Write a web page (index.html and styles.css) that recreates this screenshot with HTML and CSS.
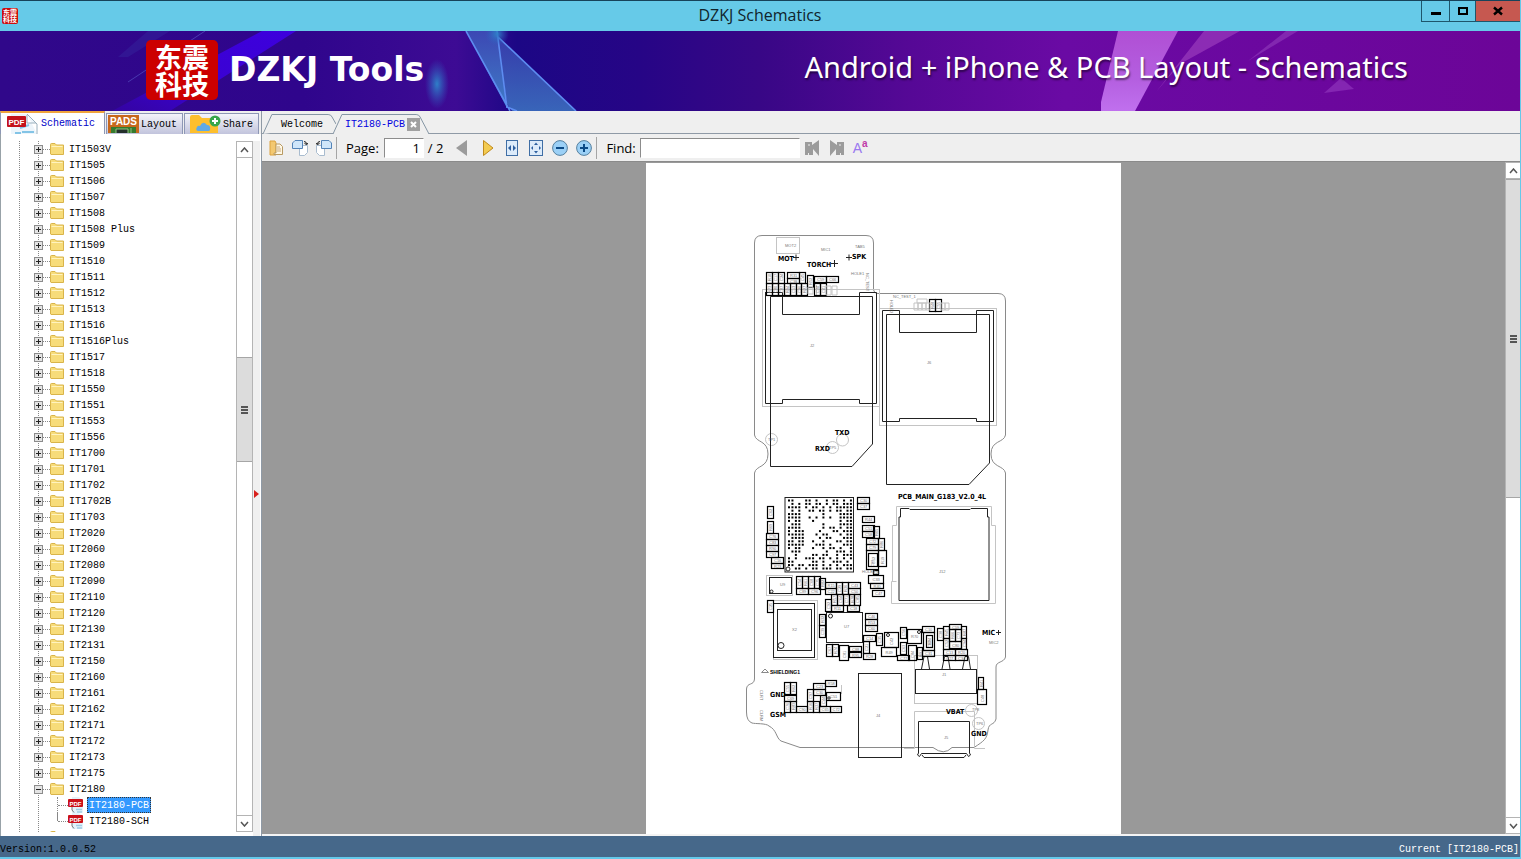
FILE: index.html
```html
<!DOCTYPE html>
<html lang="en">
<head>
    <meta charset="UTF-8">
    <meta name="viewport" content="width=device-width, initial-scale=1.0">
    <title>DZKJ Schematics</title>
    <link rel="stylesheet" href="styles.css">
</head>
<body>
    <header class="titlebar">
        <span class="app-icon"><span>东震</span><span>科技</span></span>
        <h1>DZKJ Schematics</h1>
        <div class="window-buttons">
            <button class="win-btn" aria-label="Minimize"><svg width="10" height="10"><rect y="6" width="10" height="3"/></svg></button>
            <button class="win-btn max" aria-label="Maximize"><svg width="10" height="10"><rect x="1" y="2" width="8" height="6" fill="none" stroke="#000" stroke-width="2"/></svg></button>
            <button class="win-btn close" aria-label="Close"><svg width="10" height="10"><path d="M1 1.500L9 8.500M9 1.500L1 8.500" stroke="#000" stroke-width="2.4"/></svg></button>
        </div>
    </header>

    <div class="banner">
        <svg class="banner-art" viewBox="0 31 1520 80" preserveAspectRatio="none" aria-hidden="true">
            <defs>
                <linearGradient id="bg">
                    <stop offset="0" stop-color="#30088a"/>
                    <stop offset=".2" stop-color="#2f058c"/>
                    <stop offset=".3" stop-color="#3d0b94"/>
                    <stop offset=".34" stop-color="#1c0785"/>
                    <stop offset=".42" stop-color="#260586"/>
                    <stop offset=".5" stop-color="#380786"/>
                    <stop offset=".6" stop-color="#560896"/>
                    <stop offset=".7" stop-color="#6a0aa4"/>
                    <stop offset="1" stop-color="#6c0598"/>
                </linearGradient>
                <linearGradient id="beam" x1="1" y1="0" x2="0" y2="1">
                    <stop offset="0" stop-color="#3d00dd"/>
                    <stop offset=".6" stop-color="#3a02d2"/>
                    <stop offset="1" stop-color="#3404a0"/>
                </linearGradient>
                <linearGradient id="blue" x1="0" y1="0" x2="0" y2="1">
                    <stop offset="0" stop-color="#3c48b4"/>
                    <stop offset="1" stop-color="#3f7cc6"/>
                </linearGradient>
                <linearGradient id="pink" x1="0" y1="0" x2="0" y2="1">
                    <stop offset="0" stop-color="#b04fd4"/>
                    <stop offset=".6" stop-color="#b45fe0"/>
                    <stop offset="1" stop-color="#c070ee"/>
                </linearGradient>
                <radialGradient id="spot">
                    <stop offset="0" stop-color="#2f7fc8"/>
                    <stop offset="1" stop-color="#2f5fc0" stop-opacity="0"/>
                </radialGradient>
            </defs>
            <rect y="31" width="1520" height="80" fill="url(#bg)"/>
            <path d="M262 31H296L170 111H112Z" fill="url(#beam)"/>
            <path d="M148 31H170L128 57H118Z" fill="#34209a" opacity=".6"/>
            <path d="M205 31L128 82" stroke="#4a3ab0" stroke-width="1"/>
            <ellipse cx="437" cy="84" rx="12" ry="25" fill="url(#spot)"/>
            <path d="M466 31H497L507 108Z" fill="url(#blue)"/>
            <path d="M497 36L576 111H512L507 104Z" fill="url(#blue)" opacity=".8"/>
            <path d="M466 31L510 111M497 31L507 108M497 36L576 111M507 107L517 111" stroke="#5d8cf0" stroke-width="1.6" fill="none"/>
            <circle cx="497" cy="34" r="12" fill="url(#spot)"/>
            <path d="M1204 31H1240L1180 64L1156 92Z" fill="#9a3cbc" opacity=".7"/>
            <path d="M1286 31H1298L1248 61Z" fill="#8c35b8" opacity=".7"/>
            <path d="M1118 31H1178L1135 111H1101V102Z" fill="url(#pink)"/>
            <path d="M1341 78L1354 89L1324 93Z" fill="#8426b2"/>
        </svg>
        <div class="logo"><span>东震</span><span>科技</span></div>
        <strong class="brand">DZKJ Tools</strong>
        <p class="slogan">Android + iPhone &amp; PCB Layout - Schematics</p>
    </div>

    <!-- icons shared by the tabs and the tree -->
    <svg class="sprite" aria-hidden="true">
        <symbol id="folder" viewBox="0 0 14 12">
            <path d="M.5 11V1.5Q.5.5 1.500.5H5L6.500 2H13.500V11.500H1Z" fill="#f7dc7a" stroke="#d9b44a"/>
            <path d="M1.500 3.500H12.500" stroke="#fff3c0"/>
        </symbol>
        <symbol id="pdf" viewBox="0 0 16 16">
            <path d="M4 0H11L15 4V16H4Z" fill="#e4f2fa"/>
            <path d="M4 10V13L6 15.500" stroke="#777" fill="none"/>
            <path d="M8 12.500H14M9 15H14" stroke="#9fcde4" stroke-width="1.500"/>
            <rect y="2" width="15" height="8" rx="1" fill="#cb1018"/>
            <text x="7.500" y="8.500" class="pdf-text" font-size="6">PDF</text>
        </symbol>
    </svg>

    <main class="workspace">
        <aside class="sidebar">
            <nav class="side-tabs">
                <button class="side-tab active">
                    <svg width="32" height="20" viewBox="0 0 32 20">
                        <path d="M4 0H20L30 10V20H4Z" fill="#edf5fb"/>
                        <path d="M20 0L30 10V20M20 1V9H29" fill="#fff" stroke="#9ab0bd"/>
                        <path d="M13 14L22 11M15 18H27M8 19H14" stroke="#83c4e6" stroke-width="2"/>
                        <rect y="2" width="19" height="11" rx="1" fill="#c4121b"/>
                        <text x="9.500" y="10.500" class="pdf-text" font-size="8">PDF</text>
                    </svg>
                    Schematic
                </button>
                <button class="side-tab">
                    <svg width="31" height="18" viewBox="0 0 31 18">
                        <rect width="31" height="18" fill="#c7681c"/>
                        <path d="M3 18V12H28V18Z" fill="#357a2e"/>
                        <path d="M8 18V14H20V18M23 13V18" fill="#23302b" stroke="#8fc27f"/>
                        <text x="15.500" y="10" class="pads-text">PADS</text>
                    </svg>
                    Layout
                </button>
                <button class="side-tab">
                    <svg width="32" height="18" viewBox="0 0 32 18">
                        <path d="M1 18V2Q1 0 3 0H10L13 3H27Q29 3 29 5V18Z" fill="#fdbf2d"/>
                        <path d="M9 16Q6 15 8 12Q9 10 11 11Q14 5 18 10Q22 10 21 15L20 16Z" fill="#5fa9e6"/>
                        <circle cx="26" cy="6" r="5.500" fill="#36a64a"/>
                        <path d="M23 6H29M26 3V9" stroke="#fff" stroke-width="2"/>
                    </svg>
                    Share
                </button>
            </nav>
            <div class="side-body">
                <ul class="tree" id="tree"></ul>
                <div class="scrollbar">
                    <button class="scroll-btn" aria-label="Up"><svg width="9" height="6"><path d="M1 5L4.500 1L8 5" class="chev"/></svg></button>
                    <div class="track side-track"><div class="thumb"><i></i><i></i><i></i></div></div>
                    <button class="scroll-btn" aria-label="Down"><svg width="9" height="6"><path d="M1 1L4.500 5L8 1" class="chev"/></svg></button>
                </div>
                <div class="splitter"><svg width="5" height="8"><path d="M0 0L5 4L0 8Z" fill="#d8201c"/></svg></div>
            </div>
        </aside>

        <section class="viewer">
            <nav class="doc-tabs">
                <button class="doc-tab welcome">
                    <svg class="tab-shape" viewBox="0 0 74 20" preserveAspectRatio="none"><path d="M0 20L9 .5H66Q69 .5 70 3L74 10"/></svg>
                    <span>Welcome</span>
                </button>
                <button class="doc-tab current">
                    <svg class="tab-shape" viewBox="0 0 97 20" preserveAspectRatio="none"><path d="M0 20L9 .5H84Q87 .5 88 3L97 20"/></svg>
                    <span>IT2180-PCB</span>
                    <svg class="tab-close" width="13" height="13"><rect width="13" height="13" fill="#a0a0a0"/><path d="M4 4L9 9M9 4L4 9" stroke="#fff" stroke-width="2"/></svg>
                </button>
            </nav>

            <div class="toolbar">
                <button aria-label="Open"><svg width="16" height="16"><path d="M2 1H7L8 3V15H2Z" fill="#f3c870" stroke="#dca23f"/><path d="M8 4H12L14.500 6.500V14.500H6V13H8Z" fill="#fff8e6" stroke="#b89a62"/><path d="M9 7H12M9 9H13M9 11H13" stroke="#c9a97a"/></svg></button>
                <button aria-label="Rotate right"><svg width="16" height="16"><path d="M7.500 5.500H15.500V12.500L12.500 15.500H7.500Z" fill="#fff" stroke="#a9bccf"/><path d="M3 .5H10.500V8.500H.5V3Z" fill="#cfe6fa" stroke="#5484b8"/><path d="M12 1.500Q14.500 1.500 14.500 4M12.500 3L14.500 5L16 3" fill="none" stroke="#222"/></svg></button>
                <button aria-label="Rotate left"><svg width="16" height="16"><path d="M.5 5.500H8.500V15.500H3.500L.5 12.500Z" fill="#fff" stroke="#a9bccf"/><path d="M5.500 .5H13L15.500 3V8.500H5.500Z" fill="#cfe6fa" stroke="#5484b8"/><path d="M4 1.500Q1.500 1.500 1.500 4M0 3L1.500 5L3.500 3" fill="none" stroke="#222"/></svg></button>
                <span class="sep"></span>
                <label for="page">Page:</label>
                <input class="page-input" id="page" type="text" value="1">
                <span class="pages">/ 2</span>
                <button aria-label="Previous page"><svg width="16" height="16"><path d="M13 0V16L2 8Z" fill="#9b9b9b"/></svg></button>
                <button class="next" aria-label="Next page"><svg width="16" height="16"><path d="M3.500 .5V15.500L13 8Z" fill="#f3cb50" stroke="#c08a1c"/></svg></button>
                <button aria-label="Fit width"><svg width="16" height="16"><rect x="2.500" y=".5" width="11" height="15" fill="#dcebfa" stroke="#3f6ea5"/><path d="M7 5V11L4 8ZM9 5V11L12 8Z" fill="#2d5f9f"/></svg></button>
                <button aria-label="Fit page"><svg width="16" height="16"><rect x="1.500" y=".5" width="13" height="15" fill="#dcebfa" stroke="#3f6ea5"/><path d="M8 2.500L10 5H6ZM8 13.500L6 11H10ZM3 8L5 6V10ZM13 8L11 6V10Z" fill="#2d5f9f"/></svg></button>
                <button aria-label="Zoom out"><svg width="16" height="16"><circle cx="8" cy="8" r="7.400" fill="#9bd0f6" stroke="#56809f"/><path d="M4 8H12" stroke="#0b4a86" stroke-width="2"/></svg></button>
                <button aria-label="Zoom in"><svg width="16" height="16"><circle cx="8" cy="8" r="7.400" fill="#9bd0f6" stroke="#56809f"/><path d="M4 8H12M8 4V12" stroke="#0b4a86" stroke-width="2"/></svg></button>
                <span class="sep"></span>
                <label for="find">Find:</label>
                <input class="find-input" id="find" type="text">
                <button aria-label="Find previous"><svg width="16" height="16"><path d="M0 2H7V5L14 0V16L8 9V15H0Z" fill="#9b9b9b"/><path d="M3 5H5M3.500 13V15" stroke="#eee"/></svg></button>
                <button aria-label="Find next"><svg width="16" height="16"><path d="M15 2H8V5L1 0V16L7 9V15H15Z" fill="#9b9b9b"/><path d="M10 5H12M11.500 13V15" stroke="#eee"/></svg></button>
                <button class="match-case" aria-label="Match case">A<sup>a</sup></button>
            </div>

            <div class="canvas">
                <div class="page-area">
                    <svg class="page" id="pcb" viewBox="646 163 475 671">
                        <g class="thin">
                            <path d="M762 235.500H866Q873.500 235.500 873.500 243V289Q874 293.500 878 293.500H998Q1005.500 293.500 1005.500 301V435C1004 443 991 440 991 454C991 468 1004 465 1005.500 473V657C1004 663 996 661 996 667V719C994 726 989 722 988 730C987 739 984 741 974 747.500H952Q944 756 933 747.500H800L781 741C776 738 777 730 769 726C766 723 755 724 752 723Q746.500 721 746.500 712V689C747 682 754 686 754.500 679V473C756 465 768 468 768 454C768 440 756 443 754.500 435V243Q754.500 235.500 762 235.500Z"/>
                        </g>
                        <g class="light">
                            <rect x="776.500" y="237.500" width="23" height="16"/>
                            <rect x="762.500" y="289.500" width="117" height="117"/>
                            <rect x="879.500" y="308.500" width="117" height="117"/>
                            <circle cx="771.500" cy="439.500" r="6"/>
                            <circle cx="842.500" cy="440" r="6"/>
                            <circle cx="832.500" cy="447.500" r="6"/>
                            <circle cx="971.500" cy="710.500" r="6"/>
                            <circle cx="978.500" cy="723.500" r="6"/>
                            <path d="M896.500 506.500H991.500V525.500H995.500V603.500H891.500V581.500H896.500M896.500 506.500V525.500H892.500V581"/>
                            <rect x="766.500" y="575.500" width="26" height="20"/>
                            <rect x="773.500" y="600.500" width="44" height="59"/>
                            <rect x="914.500" y="655.500" width="63" height="48"/>
                            <path d="M904 748.500H914.500V711.500H974.500V748.500H985"/>
                            <path d="M841.500 685V694M816.500 285V295"/>
                        </g>
                        <g class="thin">
                            <path d="M761.500 672.500H768.500L765 669Z"/>
                        </g>
                        <g class="line">
                            <path d="M765.500 292V403.500H782.500V399.500H859.500V403.500H876.500V292.500H859.500V314.500H782.500V292.500H765.500"/>
                            <path d="M770.500 296.500H872.500V444L852 466.500H770.500Z"/>
                            <path d="M882.500 310.500H899.500V332.500H976.500V310.500H993.500V421.500H976.500V418.500H899.500V421.500H882.500Z"/>
                            <path d="M886.500 314.500H989.500V463L969 484.500H886.500Z"/>
                            <path d="M899 600.500V517H900.500V508.500H909L910 509.500H970L971 508.500H987.500V517H989V600.500Z"/>
                            <rect x="785" y="497.500" width="68.500" height="74.500"/>
                            <rect x="769.500" y="577.500" width="22" height="16"/>
                            <circle cx="788" cy="569" r="2"/><circle cx="771.500" cy="591.500" r="1.500"/>
                            <rect x="773.500" y="603.500" width="41" height="54"/>
                            <rect x="777.500" y="609.500" width="34" height="41"/>
                            <circle cx="781" cy="645.500" r="3"/>
                            <rect x="826.500" y="612.500" width="36" height="30"/>
                            <circle cx="830.500" cy="616" r="2"/>
                            <circle cx="888" cy="635" r="1.500"/><circle cx="919" cy="632" r="1.500"/>
                            <rect x="858.500" y="673.500" width="43" height="84"/>
                            <rect x="915.500" y="669.500" width="61" height="24"/>
                            <path d="M921.500 669L924 656.500H927.500L929.500 669M942 669L944.500 656.500H948L950 669M962.500 669L965 656.500H968.500L970.500 669"/>
                            <path d="M918.500 753V721.500H969.500V753M918.500 753L917.500 755L919.500 756.500L921.500 753.500H966.500L968.500 756.500L970.500 755L969.500 753M922 755L924 757.500H964L966 755"/>
                            <circle cx="829" cy="698" r="1.200"/>
                        </g>
                        <g id="dots"></g>
                        <g class="parts" id="parts"></g>
                        <g class="mark">
                            <text x="778" y="261">MOT</text><text x="807" y="267">TORCH</text><text x="852" y="259">SPK</text>
                            <text x="835" y="435">TXD</text>
                            <text x="815" y="451">RXD</text>
                            <text x="898" y="499">PCB_MAIN_G183_V2.0_4L</text>
                            <text x="770" y="674" class="small">SHIELDING1</text>
                            <text x="770" y="697">GND</text>
                            <text x="770" y="717">GSM</text>
                            <text x="982" y="635">MIC</text>
                            <text x="946" y="714">VBAT</text>
                            <text x="971" y="736">GND</text>
                        </g>
                        <g class="plus">
                            <path d="M793 257.500H799M796 254.500V260.500M831 263.500H838M834.500 260V267M846 257.500H852M849 254.500V260.500M996 632.500H1001M998.500 630V635"/>
                        </g>
                        <g class="ref">
                            <text x="785" y="247">MOT2</text><text x="821" y="251">MIC1</text><text x="855" y="248">TAB5</text>
                            <text x="851" y="275">HOLE1</text><text x="893" y="298">NC_TEST_1</text>
                            <text x="810" y="347">J2</text><text x="927" y="364">J6</text>
                            <text x="768" y="441">TP1</text><text x="829" y="449">TP5</text>
                            <text x="939" y="573">J12</text><text x="780" y="586">U9</text><text x="792" y="631">X2</text>
                            <text x="844" y="628">U7</text><text x="862" y="573">HOLE3</text>
                            <text x="989" y="644">MIC2</text><text x="942" y="676">J1</text>
                            <text x="876" y="717">J4</text><text x="944" y="739">J5</text>
                            <text x="976" y="725">TP6</text><text x="972" y="711">TP8</text>
                            <text class="turn" x="867" y="273">NC_TEST</text><text class="turn" x="891" y="300">HOLE2</text>
                            <text class="turn" x="761" y="690">CLRT</text><text class="turn" x="761" y="710">CLRM</text>
                        </g>
                    </svg>
                </div>
                <div class="scrollbar">
                    <button class="scroll-btn" aria-label="Up"><svg width="9" height="6"><path d="M1 5L4.500 1L8 5" class="chev"/></svg></button>
                    <div class="track page-track"><div class="thumb"><i></i><i></i><i></i></div></div>
                    <button class="scroll-btn" aria-label="Down"><svg width="9" height="6"><path d="M1 1L4.500 5L8 1" class="chev"/></svg></button>
                </div>
            </div>
        </section>
    </main>

    <footer class="statusbar">
        <span>Version:1.0.0.52</span>
        <span class="current-doc">Current [IT2180-PCB]</span>
    </footer>

    <script src="app.js"></script>
</body>
</html>
```

FILE: styles.css
```css
* {
    box-sizing: border-box;
}
body {
    margin: 0;
    height: 100vh;
    display: flex;
    flex-direction: column;
    overflow: hidden;
    background-color: #efefef;
    font-family: "Liberation Mono", "Noto Sans CJK SC", monospace;
    font-size: 10px;
    color: #000;
    border-right: 1px solid #64c9ea;
}
button {
    font: inherit;
    color: inherit;
    border: none;
    background: none;
    padding: 0;
    margin: 0;
}
svg {
    display: block;
    flex: none;
}
.sprite {
    display: none;
}

/* title bar */
.titlebar {
    flex: none;
    height: 31px;
    display: grid;
    grid-template-columns: 1fr auto 1fr;
    align-items: center;
    background-color: #66cae8;
    border-top: 1px solid #17435a;
}
.titlebar h1 {
    margin: 0;
    padding-bottom: 2px;
    font: 16px/24px "Open Sans", sans-serif;
    color: #10242c;
}
.app-icon {
    display: flex;
    flex-direction: column;
    width: 16px;
    height: 16px;
    margin-left: 2px;
    padding: 1px;
    border-radius: 2px;
    background-color: #cc0d0d;
    color: #fff;
    font: bold 7px/7px "Noto Sans CJK SC", sans-serif;
}
.window-buttons {
    display: flex;
    align-self: start;
    justify-self: end;
}
.win-btn {
    width: 28px;
    height: 21px;
    display: flex;
    align-items: center;
    justify-content: center;
    border: 1px solid #1e566c;
    border-width: 0 0 1px 1px;
}
.win-btn.max {
    width: 26px;
}
.win-btn.close {
    width: 45px;
    background-color: #c65850;
}

/* banner */
.banner {
    flex: none;
    height: 80px;
    display: flex;
    align-items: center;
    position: relative;
    padding: 0 112px 2px 146px;
    color: #fff;
}
.banner-art {
    position: absolute;
    inset: 0;
    width: 100%;
    height: 100%;
}
.logo, .brand, .slogan {
    position: relative;
}
.logo {
    display: flex;
    flex-direction: column;
    align-items: center;
    justify-content: center;
    width: 72px;
    height: 60px;
    border-radius: 5px;
    background-color: #cc0000;
    font: bold 27px/27px "Noto Sans CJK SC", sans-serif;
}
.brand {
    margin-left: 11px;
    font: bold 33px/40px "DejaVu Sans", sans-serif;
}
.slogan {
    margin: 0 0 6px auto;
    font: 29px/32px "Noto Sans", sans-serif;
    text-shadow: 1px 2px 2px rgba(0,0,0,0.5);
}

/* left panel */
.workspace {
    flex: 1;
    min-height: 0;
    display: flex;
}
.sidebar {
    width: 261px;
    flex: none;
    display: flex;
    flex-direction: column;
}
.side-tabs {
    flex: none;
    display: flex;
    align-items: flex-end;
    gap: 1px;
    height: 23px;
}
.side-tab {
    display: flex;
    align-items: center;
    gap: 2px;
    height: 21px;
    padding: 0 5px 0 1px;
    border: 1px solid #8d97b5;
    border-bottom: none;
    background: linear-gradient(#f4f4fa, #c2c4dc);
    overflow: hidden;
}
.side-tab:last-child {
    padding-left: 4px;
}
.side-tab.active {
    height: 23px;
    padding: 0 9px 0 6px;
    border-top: 2px solid #f0a43c;
    background: #fff;
    color: #0000c8;
}
.pdf-text, .pads-text {
    font-family: "Liberation Sans", sans-serif;
    font-weight: bold;
    fill: #fff;
    text-anchor: middle;
}
.pads-text {
    font-size: 10px;
}
.side-body {
    flex: 1;
    min-height: 0;
    display: flex;
    padding: 7px 0 0 1px;
    border-left: 1px solid #98a2a8;
    background-color: #fff;
}
.tree {
    flex: 1;
    margin: 0 0 4px;
    padding: 0;
    overflow: hidden;
    list-style: none;
    background:
        repeating-linear-gradient(#888 0 1px, transparent 1px 2px) 17px 0 / 1px 100% no-repeat,
        repeating-linear-gradient(#888 0 1px, transparent 1px 2px) 36px 0 / 1px 100% no-repeat;
}
.tree ul {
    margin: 0 0 0 55px;
    padding: 0;
    list-style: none;
}
.row {
    display: flex;
    align-items: center;
    height: 16px;
}
.tree > li > .row {
    padding-left: 32px;
}
.expander {
    width: 9px;
    height: 9px;
    border: 1px solid #8c8c8c;
    background:
        linear-gradient(#222, #222) 1px 3px / 5px 1px no-repeat,
        linear-gradient(#222, #222) 3px 1px / 1px 5px no-repeat,
        #e4e4e4;
}
.expander.open {
    background:
        linear-gradient(#222, #222) 1px 3px / 5px 1px no-repeat,
        #e4e4e4;
}
.dots {
    width: 7px;
    border-top: 1px dotted #888;
}
.tree ul .dots {
    width: 10px;
}
.tree ul li {
    border-left: 1px dotted #888;
}
.tree ul li:last-child {
    border-image: linear-gradient(#888 50%, transparent 50%) 1;
}
.name {
    margin-left: 4px;
    padding: 2px 1px 0;
    line-height: 14px;
    white-space: nowrap;
}
.tree ul .name {
    margin-left: 3px;
    padding: 2px 2px 0;
}
.name.selected {
    background-color: #3399ff;
    color: #fff;
    outline: 1px dotted #333;
    outline-offset: -1px;
}
.splitter {
    width: 8px;
    display: flex;
    align-items: center;
    padding: 11px 0 0 1px;
    background-color: #f0f0f0;
    border-right: 1px solid #fff;
}

/* scroll bars */
.scrollbar {
    width: 17px;
    flex: none;
    display: flex;
    flex-direction: column;
    margin-bottom: 4px;
    border: 1px solid #b4b4b4;
    background-color: #fff;
}
.scroll-btn {
    flex: none;
    height: 16px;
    display: flex;
    align-items: center;
    justify-content: center;
    background-color: #fff;
    border-bottom: 1px solid #b4b4b4;
}
.scroll-btn:last-child {
    border-top: 1px solid #b4b4b4;
    border-bottom: none;
}
.chev {
    fill: none;
    stroke: #555;
    stroke-width: 1.500;
}
.track {
    flex: 1;
    display: grid;
}
.side-track {
    grid-template-rows: 200fr 105fr 354fr;
}
.page-track {
    grid-template-rows: 0 321fr 320fr;
}
.thumb {
    grid-row: 2;
    display: flex;
    flex-direction: column;
    align-items: center;
    justify-content: center;
    gap: 1px;
    background-color: #dcdcdc;
    border: 1px solid #a6a6a6;
    border-width: 1px 0;
}
.thumb i {
    width: 7px;
    height: 2px;
    background-color: #555;
}

/* document tabs */
.viewer {
    flex: 1;
    min-width: 0;
    display: flex;
    flex-direction: column;
    border-left: 1px solid #8f9aa6;
}
.doc-tabs {
    flex: none;
    display: flex;
    align-items: flex-end;
    height: 23px;
    padding-left: 1px;
    border-bottom: 1px solid #8f9aa6;
}
.doc-tab {
    position: relative;
    display: flex;
    align-items: center;
    height: 20px;
    margin-bottom: -1px;
}
.doc-tab span {
    position: relative;
}
.doc-tab.welcome {
    margin-right: -3px;
    padding: 0 13px 0 18px;
}
.doc-tab.current {
    padding: 0 9px 0 12px;
    gap: 2px;
    color: #0000e0;
}
.tab-shape {
    position: absolute;
    inset: 0;
    width: 100%;
    height: 100%;
    fill: #efefef;
    stroke: #8495a3;
}
.tab-close {
    position: relative;
}

/* toolbar */
.toolbar {
    flex: none;
    display: flex;
    align-items: center;
    gap: 8px;
    height: 28px;
    padding-left: 6px;
    border-bottom: 1px solid #8a8a8a;
    font: 13px "Open Sans", sans-serif;
}
.sep {
    width: 1px;
    height: 22px;
    margin: 0 1px 0 -4px;
    background-color: #a5a5a5;
}
.toolbar input {
    height: 20px;
    border: 1px solid #8c8c8c;
    border-color: #8c8c8c #fff #fff #8c8c8c;
    background-color: #fff;
    font: inherit;
    padding: 0 3px;
}
.page-input {
    width: 40px;
    margin-left: -3px;
    text-align: right;
}
.find-input {
    width: 160px;
    margin: 0 -3px 0 -4px;
}
.pages {
    margin-left: -4px;
    margin-right: 3px;
}
.next {
    margin-left: 2px;
}
.match-case {
    font: 14px "Liberation Sans", sans-serif;
    color: #9a78f0;
}
.match-case sup {
    font-size: 10px;
    font-weight: bold;
    line-height: 0;
    color: #c03ca8;
}

/* page view */
.canvas {
    flex: 1;
    min-height: 0;
    display: flex;
    background-color: #999;
    border-bottom: 2px solid #f4f4f4;
}
.page-area {
    flex: 1;
    display: flex;
    justify-content: center;
    padding-top: 1px;
}
.page {
    height: 100%;
    aspect-ratio: 475 / 671;
    background-color: #fff;
}
.canvas .scrollbar {
    width: 15px;
    margin-bottom: 0;
    border-right: none;
}
.page path, .page rect, .page circle {
    fill: none;
}
.thin {
    stroke: #8a8a8a;
}
.light {
    stroke: #c4c4c4;
}
.line, .plus {
    stroke: #222;
}
.parts rect {
    stroke: #000;
    stroke-width: 1.200;
}
.parts text, .ref text {
    font: 4px "Liberation Sans", sans-serif;
    fill: #777;
}
.ref .turn {
    writing-mode: vertical-rl;
}
.page .dot {
    fill: #000;
}
.mark text {
    font: bold 7px "DejaVu Sans Condensed", "Liberation Sans", sans-serif;
}
.mark .small {
    font: bold 5px "Liberation Sans", sans-serif;
}

/* status bar */
.statusbar {
    flex: none;
    height: 23px;
    display: flex;
    justify-content: space-between;
    align-items: center;
    padding: 5px 1px 0 0;
    background-color: #46688a;
    border-bottom: 2px solid #64c9ea;
}
.current-doc {
    color: #fff;
}
```

FILE: app.js
```js
const folders = [
    'IT1503V', 'IT1505', 'IT1506', 'IT1507', 'IT1508', 'IT1508 Plus', 'IT1509', 'IT1510',
    'IT1511', 'IT1512', 'IT1513', 'IT1516', 'IT1516Plus', 'IT1517', 'IT1518', 'IT1550',
    'IT1551', 'IT1553', 'IT1556', 'IT1700', 'IT1701', 'IT1702', 'IT1702B', 'IT1703',
    'IT2020', 'IT2060', 'IT2080', 'IT2090', 'IT2110', 'IT2120', 'IT2130', 'IT2131',
    'IT2150', 'IT2160', 'IT2161', 'IT2162', 'IT2171', 'IT2172', 'IT2173', 'IT2175', 'IT2180'
];
const files = ['IT2180-PCB', 'IT2180-SCH'];

function fileRow(name) {
    const cls = name === 'IT2180-PCB' ? 'name selected' : 'name';
    return `<li><div class="row"><span class="dots"></span><svg width="16" height="16"><use href="#pdf"/></svg><button class="${cls}">${name}</button></div></li>`;
}

function folderRow(name) {
    const open = name === 'IT2180';
    return `<li><div class="row"><button class="expander${open ? ' open' : ''}" aria-label="${open ? 'Collapse' : 'Expand'} ${name}"></button>` +
        `<span class="dots"></span><svg width="14" height="12"><use href="#folder"/></svg><span class="name">${name}</span></div>` +
        (open ? `<ul>${files.map(fileRow).join('')}</ul>` : '') + '</li>';
}

document.getElementById('tree').innerHTML = folders.map(folderRow).join('') +
    '<li><div class="row"><span class="expander"></span><span class="dots"></span><svg width="14" height="12"><use href="#folder"/></svg></div></li>';

// small components: x, y, width, height
const parts = [
    [766,272,6,11],[772,272,6,11],[778,272,6,11],[787,272,12,6],[787,278,12,5],[799,272,6,11],[807,275,6,12],
    [814,276,12,6],[826,276,12,6],[766,283,6,12],[772,283,6,12],[778,283,6,12],[784,283,6,12],[790,283,6,12],
    [796,283,5,12],[801,283,6,12],[814,283,6,12],[820,283,6,12],[929,299,6,12],[935,299,6,12],
    [767,506,6,12],[767,521,6,12],[766,533,12,6],[766,539,12,6],[766,545,12,6],[766,551,12,6],[771,557,12,6],[771,563,12,5],
    [857,497,12,6],[857,503,12,6],[862,516,12,6],[862,525,12,6],[862,531,12,6],[873,526,6,12],
    [866,538,12,6],[866,544,12,6],[878,538,6,12],[866,550,12,19],[868,553,9,13],[878,550,8,16],[873,570,5,4],
    [868,575,15,8],[870,583,13,5],[872,590,12,6],
    [796,576,6,12],[802,576,6,12],[808,576,6,12],[814,576,6,12],[819,578,6,11],[796,588,12,6],[808,588,12,6],
    [825,582,11,6],[825,588,11,6],[836,582,6,12],[842,582,6,12],[848,582,12,6],[848,588,12,6],
    [831,594,6,11],[837,594,6,11],[843,594,6,11],[849,594,5,11],[854,594,6,11],[825,599,6,12],[831,605,12,6],[847,605,12,6],
    [767,600,6,12],[819,614,6,11],[819,625,6,12],[865,613,12,6],[865,619,12,6],[865,625,12,6],
    [826,644,6,12],[832,644,6,12],[839,645,9,15],[849,646,12,5],[849,652,12,5],[863,635,12,6],[863,641,6,12],[863,653,12,6],[876,633,6,12],
    [884,632,14,15],[881,647,15,9],[900,627,6,11],[900,642,6,12],[907,629,14,14],[897,655,12,5],[908,645,8,15],
    [917,647,5,12],[922,626,12,6],[923,632,11,18],[926,635,6,12],[922,650,12,6],[937,628,6,12],
    [943,626,6,12],[943,638,6,11],[949,624,12,5],[949,629,6,12],[955,629,6,12],[949,641,12,7],[961,626,5,12],[961,638,5,11],
    [943,649,12,6],[955,649,12,6],[943,655,12,5],[955,655,12,5],[978,677,5,12],[977,689,9,15],
    [784,682,6,12],[790,682,6,12],[784,695,12,6],[784,701,6,11],[790,701,6,11],[796,706,11,6],[807,689,6,12],[807,701,6,11],
    [813,683,12,6],[813,689,12,6],[813,701,6,11],[820,695,6,11],[826,692,14,8],[825,680,11,6],[819,706,11,6],[830,706,11,6]
];
const faint = [[914,303,4,7],[918,303,4,7],[922,303,4,7],[926,303,4,7],[917,299,10,4],[941,303,4,7],[945,303,4,7],[826,286,5,9],[832,286,5,9],[808,287,5,7]];

document.getElementById('parts').innerHTML = parts.map(([x, y, w, h], i) => {
    const ref = (i % 3 ? 'C' : 'R') + (10 + i * 7 % 88);
    const text = w < h
        ? `<text transform="translate(${x + w / 2 + 2} ${y + h - 2}) rotate(-90)">${ref}</text>`
        : `<text x="${x + w / 2 - 3}" y="${y + h / 2 + 2}">${ref}</text>`;
    return `<rect x="${x + 0.5}" y="${y + 0.5}" width="${w}" height="${h}"/>${text}`;
}).join('') + '<g class="light">' + faint.map(([x, y, w, h]) => `<path d="M${x} ${y}h${w}v${h}h${-w}z"/>`).join('') + '</g>';

// solder balls of the main chip
const balls = [
    'xx...xx.x..x.xx.x.x',
    '.x.x.xx.xx.x.xx.xxx',
    'xxxx.x.xx.x.x.xxxxx',
    '.x.x..xx.xx.x.xx.xx',
    'xxxx......x....xxxx',
    'xxxx..x.x.x.x..xxxx',
    'x.xx...x.......x.xx',
    '.xxx......x....xxxx',
    'xxxx......x.xx.x.xx',
    'x.xxx....x...xx.xxx',
    'xxxxx...x.xx...x.xx',
    '.xxxx....x.xx...xxx',
    'xx.xx..x..x...xx.xx',
    'xxxxx...xxx.x...xxx',
    'x.xx...x..x.xx.x..x',
    '.xxx.......x..xxx.x',
    '..x....xx.xx..x.xxx',
    'x.x..xxx.xx.x.x.x.x',
    'xx.....xx.x..xxx.x.',
    'xx.xx.xxx.x.x.x.xxx',
    '..xx.x.xx.xxx.xx.xx'
];
document.getElementById('dots').innerHTML = balls.map((line, r) =>
    [...line].map((c, i) => c === 'x'
        ? `<rect class="dot" x="${788 + i * 3.44}" y="${499.5 + r * 3.4}" width="2" height="2"/>`
        : '').join('')
).join('');
```
